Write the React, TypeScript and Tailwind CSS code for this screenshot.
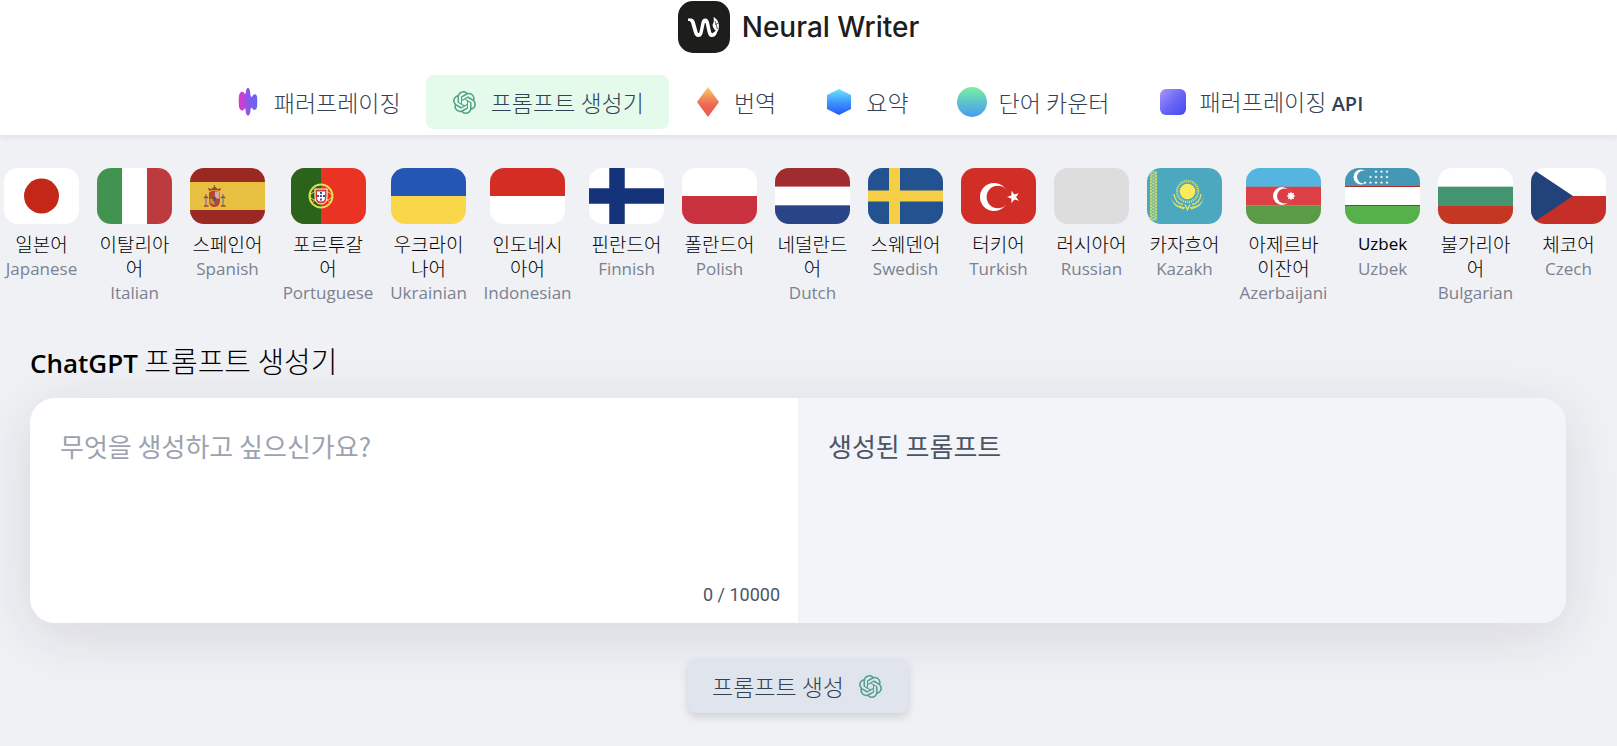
import React from "react";
import { SiOpenai } from "react-icons/si";

const star = (cx: number, cy: number, r: number, points = 5, inner = 0.4, turn = -90) =>
  Array.from({ length: points * 2 }, (_, i) => {
    const a = ((turn + (i * 180) / points) * Math.PI) / 180;
    const d = i % 2 ? r * inner : r;
    return `${(cx + d * Math.cos(a)).toFixed(2)},${(cy + d * Math.sin(a)).toFixed(2)}`;
  }).join(" ");

const bands = (...colors: string[]) =>
  colors.map((c, i) => (
    <rect key={i} y={(56 / colors.length) * i} width="75" height={56 / colors.length + 0.2} fill={c} />
  ));

const flags: Record<string, React.ReactNode> = {
  Japanese: (
    <>
      <rect width="75" height="56" fill="#fff" />
      <circle cx="37.5" cy="28" r="17.5" fill="#c22718" />
    </>
  ),
  Italian: (
    <>
      <rect width="75" height="56" fill="#fff" />
      <rect width="25" height="56" fill="#439350" />
      <rect x="50" width="25" height="56" fill="#bd3b3e" />
    </>
  ),
  Spanish: (
    <>
      <rect width="75" height="56" fill="#9a2823" />
      <rect y="14" width="75" height="28" fill="#e7c042" />
      <path d="M19 24.5q5.5-4 11 0v8q0 6-5.5 6.500T19 32.500z" fill="#b04832" />
      <path d="M25 23.500h4.500v7H25z" fill="#dba6a8" />
      <path d="M19.500 31h5v6q-5-1-5-5z" fill="#c98f32" />
      <ellipse cx="24.500" cy="31" rx="1.800" ry="2.200" fill="#3c5c8f" />
      <path d="M19 23l-1-3 3.500 1 3-3 3 3 3.500-1-1 3q-5.500-2-11 0z" fill="#a5432a" />
      <path d="M16 26v11M33 26v11" stroke="#a58f76" strokeWidth="2" />
      <path d="M14 30q2-2 4 0M31 30q2-2 4 0M14 38h4.500M31 38h4.500" stroke="#a83f2c" strokeWidth="1.500" fill="none" />
      <path d="M24.500 17v3" stroke="#7b6932" strokeWidth="1" />
    </>
  ),
  Portuguese: (
    <>
      <rect width="75" height="56" fill="#ea3323" />
      <rect width="30" height="56" fill="#2a6319" />
      <circle cx="30" cy="28" r="11.500" fill="none" stroke="#e2df50" strokeWidth="2" />
      <ellipse cx="30" cy="28" rx="11" ry="5" fill="none" stroke="#d9d348" strokeWidth="1" />
      <path d="M21 20q8 3 18 15M39 20q-8 3-18 15" fill="none" stroke="#d9d348" strokeWidth="1" />
      <path d="M24 21h12v8q0 7-6 7t-6-7z" fill="#e5382b" stroke="#fff" strokeWidth="1" />
      <path d="M26 23.500h8v6q0 4-4 4t-4-4z" fill="#fff" />
      <path d="M30 24v2M30 27v2M30 30.500v2M27 27v2M33 27v2" stroke="#243f9a" strokeWidth="1.800" />
    </>
  ),
  Ukrainian: bands("#2456b4", "#f8d84a"),
  Indonesian: bands("#d32d24", "#ffffff"),
  Finnish: (
    <>
      <rect width="75" height="56" fill="#fff" />
      <path d="M0 28h75M28 0v56" stroke="#14337a" strokeWidth="15.500" />
    </>
  ),
  Polish: bands("#ffffff", "#c9313f"),
  Dutch: bands("#a02c30", "#ffffff", "#294587"),
  Swedish: (
    <>
      <rect width="75" height="56" fill="#22528f" />
      <path d="M0 28h75M26.500 0v56" stroke="#f7cf46" strokeWidth="11" />
    </>
  ),
  Turkish: (
    <>
      <rect width="75" height="56" fill="#d02e27" />
      <circle cx="33" cy="29" r="14" fill="#fff" />
      <circle cx="36.800" cy="29" r="11.200" fill="#d02e27" />
      <polygon points={star(52.500, 29, 6.500, 5, 0.4, 180)} fill="#fff" />
    </>
  ),
  Russian: <rect width="75" height="56" fill="#dddddd" />,
  Kazakh: (
    <>
      <rect width="75" height="56" fill="#4ca8be" />
      <rect x="3" y="3" width="7" height="50" fill="#83be97" />
      <path d="M4 4v48M9 4v48" stroke="#d7dc62" strokeWidth="1.500" strokeDasharray="2 1" />
      <path d="M6.500 3v50" stroke="#d7dc62" strokeWidth="2" strokeDasharray="1 2" />
      <circle cx="40.500" cy="23.500" r="7.800" fill="#fbeb5b" />
      <circle cx="40.500" cy="23.500" r="10.500" fill="none" stroke="#e5e163" strokeWidth="2.500" strokeDasharray="1 1" />
      <path
        d="M23.500 26q1 10 10 12l5 1.500-2 2-5-2q-7-3-8-13.500zM57.500 26q-1 10-10 12l-5 1.500 2 2 5-2q7-3 8-13.500z"
        fill="#dfde65"
      />
      <path d="M27 26q1 9 9 10.500M54 26q-1 9-9 10.500M38 36.500l2.500 5 2.500-5" stroke="#dfde65" strokeWidth="1.500" fill="none" />
    </>
  ),
  Azerbaijani: (
    <>
      {bands("#53b5e0", "#dc3f45", "#5c9b45")}
      <circle cx="36" cy="28" r="9" fill="#fff" />
      <circle cx="38.500" cy="28" r="7.500" fill="#dc3f45" />
      <polygon points={star(45, 28, 4.500, 8, 0.6)} fill="#fff" />
    </>
  ),
  Uzbek: (
    <>
      {bands("#4498b5", "#ffffff", "#57b14b")}
      <path d="M0 18.500h75M0 37.500h75" stroke="#b32b2c" strokeWidth="1.200" />
      <circle cx="16" cy="9" r="7.500" fill="#fff" />
      <circle cx="18.500" cy="9" r="6.500" fill="#4498b5" />
      {[
        [31, 3.500], [36.500, 3.500], [42, 3.500],
        [25.500, 9], [31, 9], [36.500, 9], [42, 9],
        [20, 14.500], [25.500, 14.500], [31, 14.500], [36.500, 14.500], [42, 14.500],
      ].map(([x, y]) => (
        <polygon key={`${x}-${y}`} points={star(x, y, 1.800)} fill="#fff" />
      ))}
    </>
  ),
  Bulgarian: bands("#ffffff", "#439470", "#c43723"),
  Czech: (
    <>
      {bands("#ffffff", "#c52f28")}
      <path d="M0 0l42 28L0 56z" fill="#22437a" />
    </>
  ),
};

const languages: { native: string; name: string; width?: string }[] = [
  { native: "일본어", name: "Japanese" },
  { native: "이탈리아어", name: "Italian" },
  { native: "스페인어", name: "Spanish" },
  { native: "포르투갈어", name: "Portuguese", width: "w-[90px]" },
  { native: "우크라이나어", name: "Ukrainian" },
  { native: "인도네시아어", name: "Indonesian", width: "w-[87px]" },
  { native: "핀란드어", name: "Finnish" },
  { native: "폴란드어", name: "Polish" },
  { native: "네덜란드어", name: "Dutch" },
  { native: "스웨덴어", name: "Swedish" },
  { native: "터키어", name: "Turkish" },
  { native: "러시아어", name: "Russian" },
  { native: "카자흐어", name: "Kazakh" },
  { native: "아제르바이잔어", name: "Azerbaijani", width: "w-[87px]" },
  { native: "Uzbek", name: "Uzbek" },
  { native: "불가리아어", name: "Bulgarian" },
  { native: "체코어", name: "Czech" },
];

const Gradient = ({ id, stops, x2 = "0", y2 = "1" }: { id: string; stops: string[]; x2?: string; y2?: string }) => (
  <linearGradient id={id} x1="0" y1="0" x2={x2} y2={y2}>
    {stops.map((c, i) => (
      <stop key={i} offset={i / (stops.length - 1)} stopColor={c} />
    ))}
  </linearGradient>
);

const Icon = ({ children }: { children: React.ReactNode }) => (
  <svg viewBox="0 0 28 28" className="h-7 w-7 shrink-0 overflow-visible" aria-hidden="true">
    {children}
  </svg>
);

const tools: { label: string; suffix?: string; active?: boolean; icon: React.ReactNode }[] = [
  {
    label: "패러프레이징",
    icon: (
      <Icon>
        <Gradient id="wave" x2="1" y2="0" stops={["#e733c8", "#8b57e8", "#6366f7"]} />
        <path
          d="M5 8c.3-4.500 4.300-5.500 5.500-2.500.3.800 1 .8 1.200-.5C12 1.500 12.700 0 14 0s2 1.500 2.300 5.500c.2 3.500 1.200 4.500 2.200 2.500 1.200-2.500 4.500-2.500 4.700 2v7.500c-.2 5-3.700 5.500-4.700 3-.7-1.500-1.800-1-2 1.500-.4 4-1 5.500-2.500 5.500s-2.200-2-2.500-6c-.1-1.500-.7-1.500-1.300-.3C9 23.500 5.500 22.500 5 18.500 4.600 15 4.600 11.500 5 8z"
          fill="url(#wave)"
        />
      </Icon>
    ),
  },
  {
    label: "프롬프트 생성기",
    active: true,
    icon: (
      <span className="flex h-7 w-7 items-center justify-center">
        <SiOpenai className="h-[23px] w-[23px] text-[#4fa188]" />
      </span>
    ),
  },
  {
    label: "번역",
    icon: (
      <Icon>
        <Gradient id="diamond" stops={["#f6d26b", "#f0935c", "#ed5f51", "#ed5f51"]} />
        <path d="M14-1l11 15-11 15L3 14z" fill="url(#diamond)" />
      </Icon>
    ),
  },
  {
    label: "요약",
    icon: (
      <Icon>
        <Gradient id="hexagon" stops={["#6ce6fd", "#3f97fb", "#2458f8"]} />
        <path d="M13 1l12 6v14l-12 6-12-6V7z" fill="url(#hexagon)" />
      </Icon>
    ),
  },
  {
    label: "단어 카운터",
    icon: (
      <Icon>
        <Gradient id="disc" stops={["#79f2a0", "#5dc3ca", "#4b98f5"]} />
        <circle cx="13" cy="14" r="15" fill="url(#disc)" />
      </Icon>
    ),
  },
  {
    label: "패러프레이징",
    suffix: "API",
    icon: (
      <Icon>
        <Gradient id="tile" x2="1" stops={["#a797fb", "#6a68f4", "#4248ee"]} />
        <rect x="1" y="1" width="26" height="26" rx="6" fill="url(#tile)" />
      </Icon>
    ),
  },
];

const ko = "font-['Noto_Sans_CJK_KR',sans-serif] font-light";
const latin = "font-['Open_Sans','Noto_Sans_CJK_KR',sans-serif]";

export default function App() {
  return (
    <div className="min-h-screen overflow-hidden bg-[#f0f1f5] pb-8">
      <header className="bg-white pr-5 pb-1.5 shadow-[0_2px_6px_rgba(30,41,80,0.08)]">
        <a href="#" className="mx-auto flex w-fit items-center gap-3 pt-px text-[#1d1d1b]">
          <svg viewBox="0 0 52 52" className="h-[52px] w-[52px]" aria-hidden="true">
            <rect width="52" height="52" rx="15" fill="#1d1d1b" />
            <path
              d="M10 17.500h2c3.500 0 4.300 1.500 5.300 5l2.200 8c.6 2 1.800 2 2.100 0l1.600-8c.7-3.500 1.800-5 4-5 2.300 0 3.400 1.500 4.100 5l1.700 8c.5 2 1.500 2.300 2.500 1l4.500-3.500c-1 5-2.600 8-5.800 8-3 0-4-2-4.800-5.500l-1.700-8c-.2-1-.8-1-1 0l-1.800 8.500c-.7 3.500-1.900 5-4.400 5-2.600 0-3.800-1.500-4.800-5l-2.600-9c-.4-1.500-1-2-3.100-2z"
              fill="#fff"
            />
            <path d="M35.500 16c4.500 2.500 6.500 7 5 12.500l-1 2c-3-1-4.500-3.500-5-6.500 1.500-2.500 1.600-5 1-8z" fill="#fff" />
            <path d="M37 20l2.500 8M37.500 23.500l3-1.500" stroke="#1d1d1b" strokeWidth=".7" />
          </svg>
          <span className="font-['Inter',sans-serif] text-[28px] leading-[52px] font-medium">Neural Writer</span>
        </a>
        <nav className="mt-[22px] flex justify-center">
          {tools.map((t, i) => (
            <a
              key={i}
              href="#"
              aria-current={t.active ? "page" : undefined}
              className={`flex h-[54px] items-center gap-3 rounded-lg px-[25px] whitespace-nowrap text-[#334155] ${
                t.active ? "bg-[#e4fbeb]" : ""
              }`}
            >
              {t.icon}
              <span className={`text-[23px] leading-8 ${ko}`}>
                {t.label}
                {t.suffix && <span className={`text-[20px] font-semibold ${latin}`}> {t.suffix}</span>}
              </span>
            </a>
          ))}
        </nav>
      </header>

      <main>
        <ul className="flex gap-[18px] pt-[33px] pl-1">
          {languages.map((l) => (
            <li key={l.name} className={`shrink-0 ${l.width ?? "w-[75px]"}`}>
              <a href="#" className="flex flex-col items-center text-center">
                <svg viewBox="0 0 75 56" className="h-14 w-[75px] rounded-[14px]" aria-hidden="true">
                  {flags[l.name]}
                </svg>
                <span
                  className={`mt-2 w-[75px] leading-6 break-all text-black ${
                    l.native === l.name ? `text-[17px] ${latin}` : `text-[19px] ${ko}`
                  }`}
                >
                  {l.native}
                </span>
                <span className={`pt-px text-[17px] leading-6 text-[#7b8190] ${latin}`}>{l.name}</span>
              </a>
            </li>
          ))}
        </ul>

        <section className="pt-[33px] pr-[51px] pl-[30px]">
          <h1 className={`text-[29px] leading-[44px] text-black ${ko}`}>
            <span className={`text-[26px] font-semibold ${latin}`}>ChatGPT</span> 프롬프트 생성기
          </h1>
          <div className="mt-[13px] grid grid-cols-2 overflow-hidden rounded-[25px] shadow-[0_12px_60px_rgba(30,32,40,0.12)]">
            <div className="flex flex-col bg-white px-[30px] pt-[30px] pb-3">
              <textarea
                aria-label="프롬프트 입력"
                placeholder="무엇을 생성하고 싶으신가요?"
                className="h-[151px] w-full resize-none bg-transparent font-['Noto_Sans_CJK_KR',sans-serif] text-[26px] leading-9 text-[#334155] outline-none placeholder:text-[#9ca3af]"
              />
              <div className="-mr-3 text-right font-['Roboto',sans-serif] text-[18px] leading-8 text-[#4b5563]">0 / 10000</div>
            </div>
            <div className="bg-[#f2f4f9] p-[30px] font-['Noto_Sans_CJK_KR',sans-serif] text-[26px] leading-9 text-[#4b5563]">
              생성된 프롬프트
            </div>
          </div>
          <div className="mt-9 flex justify-center">
            <button
              type="button"
              className="flex h-[54px] items-center gap-3 rounded-lg bg-[#e0e4ed] px-6 text-[#334155] shadow-[0_4px_8px_rgba(30,41,59,0.16)]"
            >
              <span className={`text-[23px] leading-8 ${ko}`}>프롬프트 생성</span>
              <span className="flex h-7 w-7 items-center justify-center">
                <SiOpenai className="h-[23px] w-[23px] text-[#4fa188]" />
              </span>
            </button>
          </div>
        </section>
      </main>
    </div>
  );
}
